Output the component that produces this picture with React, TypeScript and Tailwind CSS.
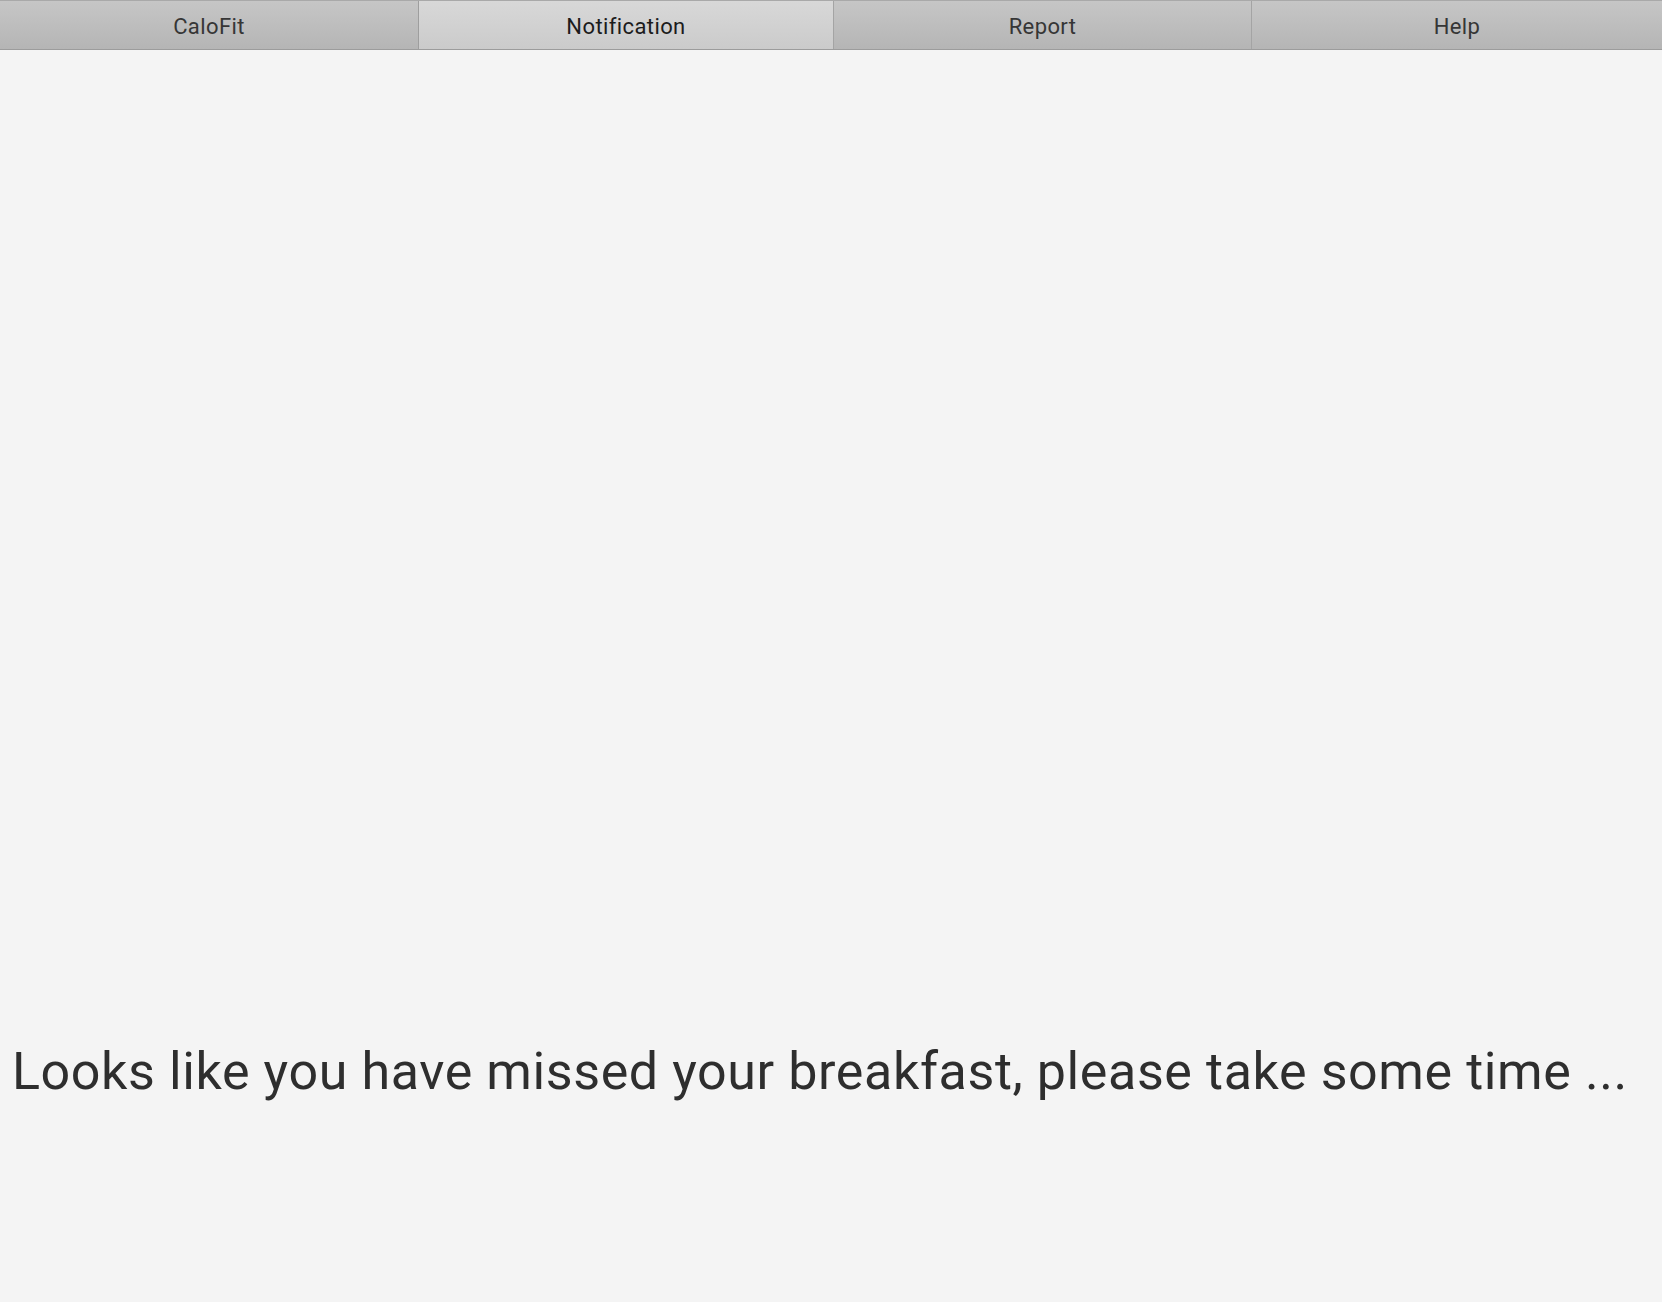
const tabs = [
  { label: "CaloFit", width: "w-[418px]" },
  { label: "Notification", width: "w-[415px]" },
  { label: "Report", width: "w-[418px]" },
  { label: "Help", width: "flex-1" },
];

export default function App() {
  const active = "Notification";

  return (
    <div className="flex h-[1302px] w-full flex-col bg-[#f4f4f4] font-['Roboto',sans-serif]">
      <div className="flex h-[50px] border-t border-b border-t-[#a9a9a9] border-b-[#9c9c9c] bg-gradient-to-b from-[#c6c6c6] to-[#b5b5b5]">
        {tabs.map((tab, i) => (
          <div
            key={tab.label}
            className={
              tab.label === active
                ? `${tab.width} flex items-center justify-center border-l border-[#9e9e9e] bg-gradient-to-b from-[#d8d8d8] to-[#cbcbcb] pt-[3px] text-[22px] tracking-[0.4px] text-[#1c1c1c]`
                : i === 0
                  ? `${tab.width} flex items-center justify-center pt-[3px] text-[22px] tracking-[0.4px] text-[#363636]`
                  : `${tab.width} flex items-center justify-center border-l border-[#a4a4a4] pt-[3px] text-[22px] tracking-[0.4px] text-[#363636]`
            }
          >
            {tab.label}
          </div>
        ))}
      </div>

      <div className="px-3 pt-[996px]">
        <p className="whitespace-nowrap text-[52px] leading-[52px] tracking-[0.6px] text-[#2e2e2e]">
          Looks like you have missed your breakfast, please take some time ...
        </p>
      </div>
    </div>
  );
}
